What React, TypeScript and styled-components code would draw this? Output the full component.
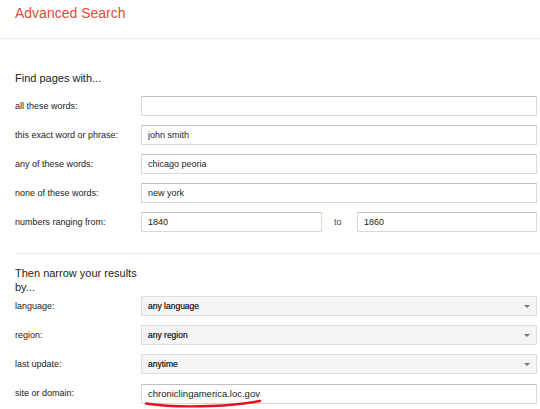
import styled, { createGlobalStyle } from 'styled-components';

const GlobalStyle = createGlobalStyle`
  html, body {
    margin: 0;
    padding: 0;
    background: #fff;
    overflow: hidden;
  }
  body {
    font-family: Arial, "Liberation Sans", sans-serif;
    color: #222;
  }
`;

const Page = styled.div`
  width: 540px;
  height: 409px;
  display: flex;
  flex-direction: column;
`;

const Header = styled.div`
  height: 39px;
  padding: 5px 0 0 15px;
  box-sizing: border-box;
  border-bottom: 1px solid #ebebeb;
`;

const Title = styled.h1`
  margin: 0;
  font-size: 14px;
  line-height: 17px;
  font-weight: normal;
  color: #dd4b39;
`;

const Section = styled.div<{ top: number }>`
  padding: ${(p) => p.top}px 3px 0 15px;
  display: flex;
  flex-direction: column;
  gap: 11px;
`;

const Heading = styled.h2`
  margin: 0;
  width: 126px;
  font-size: 11px;
  line-height: 14px;
  font-weight: normal;
  color: #222;
`;

const Rows = styled.div`
  display: flex;
  flex-direction: column;
  gap: 9px;
`;

const Row = styled.div`
  display: grid;
  grid-template-columns: 126px 1fr;
  align-items: center;
  height: 20px;
`;

const Label = styled.label`
  font-size: 9px;
  color: #222;
`;

const Input = styled.input<{ big?: boolean }>`
  box-sizing: border-box;
  width: 100%;
  height: 20px;
  margin: 0;
  padding: 0 6px;
  border: 1px solid #d9d9d9;
  border-top-color: #c0c0c0;
  border-radius: 1px;
  font-family: Arial, "Liberation Sans", sans-serif;
  font-size: ${(p) => (p.big ? '9.5px' : '9px')};
  color: #222;
  outline: none;
`;

const Range = styled.div`
  display: grid;
  grid-template-columns: 181px 35px 1fr;
  align-items: center;
`;

const To = styled.span`
  font-size: 9px;
  color: #444;
  padding-left: 12px;
`;

const Select = styled.div`
  box-sizing: border-box;
  height: 20px;
  display: flex;
  align-items: center;
  justify-content: space-between;
  padding: 0 6px;
  background: #f5f5f5;
  border: 1px solid #dcdcdc;
  border-radius: 1px;
  font-size: 8.5px;
  color: #333;
  text-shadow: 0 0 0.4px #333;
`;

const Arrow = styled.span`
  width: 0;
  height: 0;
  border-left: 3px solid transparent;
  border-right: 3px solid transparent;
  border-top: 3px solid #777;
`;

const Divider = styled.div`
  margin: 21px 0 0 15px;
  border-top: 1px solid #ebebeb;
`;

const Marked = styled.div`
  position: relative;
`;

const Scribble = styled.svg`
  position: absolute;
  left: 0;
  top: 0;
  pointer-events: none;
  overflow: visible;
`;

const words = [
  { label: 'all these words:', value: '' },
  { label: 'this exact word or phrase:', value: 'john smith' },
  { label: 'any of these words:', value: 'chicago peoria' },
  { label: 'none of these words:', value: 'new york' },
];

const selects = [
  { label: 'language:', value: 'any language' },
  { label: 'region:', value: 'any region' },
  { label: 'last update:', value: 'anytime' },
];

export default function App() {
  return (
    <Page>
      <GlobalStyle />
      <Header>
        <Title>Advanced Search</Title>
      </Header>
      <Section top={32}>
        <Heading>Find pages with...</Heading>
        <Rows>
          {words.map((w) => (
            <Row key={w.label}>
              <Label>{w.label}</Label>
              <Input defaultValue={w.value} />
            </Row>
          ))}
          <Row>
            <Label>numbers ranging from:</Label>
            <Range>
              <Input defaultValue="1840" />
              <To>to</To>
              <Input defaultValue="1860" />
            </Range>
          </Row>
        </Rows>
      </Section>
      <Divider />
      <Section top={12}>
        <Heading>Then narrow your results by...</Heading>
      </Section>
      <Section top={2}>
        <Rows>
          {selects.map((s) => (
            <Row key={s.label}>
              <Label>{s.label}</Label>
              <Select>
                {s.value}
                <Arrow />
              </Select>
            </Row>
          ))}
          <Row>
            <Label>site or domain:</Label>
            <Marked>
              <Input big defaultValue="chroniclingamerica.loc.gov" />
              <Scribble width="130" height="26">
                <path
                  d="M5 20.5 C 25 23.5, 45 24, 70 23 S 105 20.5, 119 18"
                  fill="none"
                  stroke="#e8101c"
                  strokeWidth="2.4"
                  strokeLinecap="round"
                />
              </Scribble>
            </Marked>
          </Row>
        </Rows>
      </Section>
    </Page>
  );
}
